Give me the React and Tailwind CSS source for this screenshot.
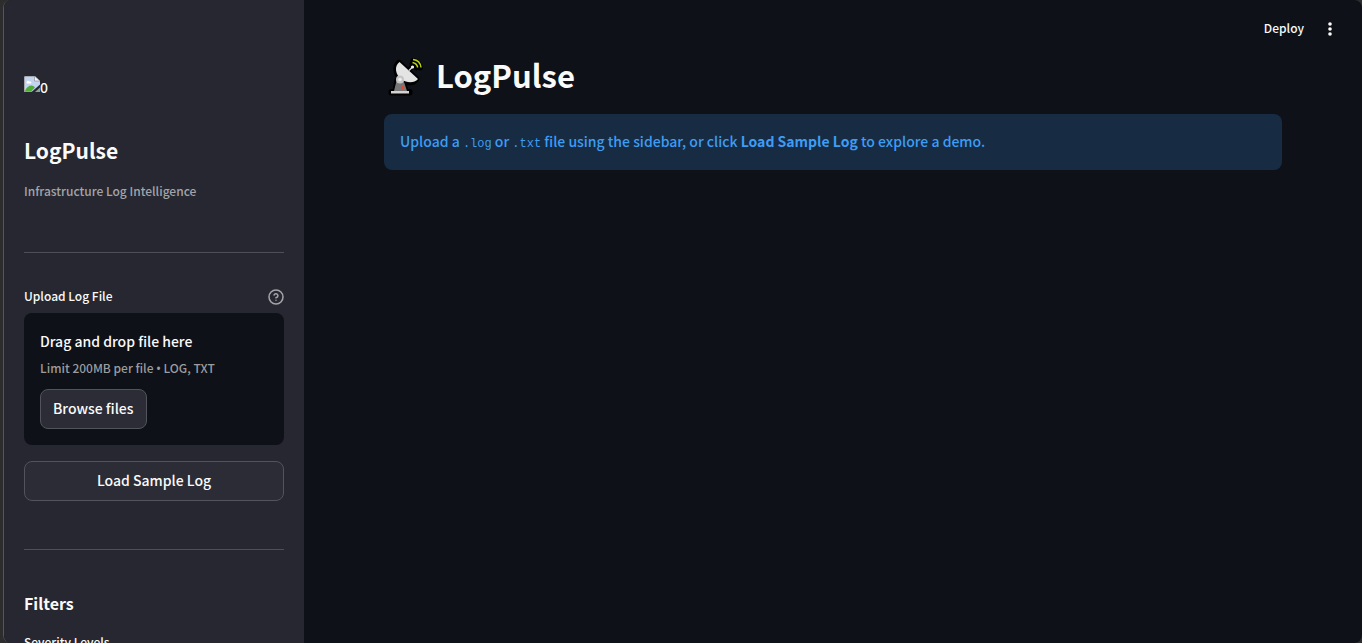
import { useRef } from "react";

function BrokenImage() {
  return (
    <svg width="16" height="16" viewBox="0 0 16 16" aria-hidden="true">
      <path d="M0 2a2 2 0 0 1 2-2h8.500L16 5v3.500L7.500 16H0z" fill="#c3d4f3" />
      <path d="M0 2a2 2 0 0 1 2-2h9v1H2a1 1 0 0 0-1 1v14H0z" fill="#a6a8ae" />
      <path d="M10.500 0L16 5h-5.500z" fill="#f8f8f8" stroke="#8d8f94" strokeWidth=".7" />
      <path d="M2.500 6.500c0-2 2.500-2.500 3-1 1.500-.5 2.500 1 1.500 2H3.500c-.6 0-1-.4-1-1z" fill="#fff" />
      <path d="M1 15c1-3.500 4-5.500 6.500-5.500 1.500 0 2.500.7 3.500 2L7.500 15z" fill="#4fae35" />
      <path d="M0 15.500h8" stroke="#9a9ca0" />
      <path d="M11 16l5-4.500V16z" fill="#8fa58d" />
    </svg>
  );
}

function Satellite() {
  return (
    <svg width="36" height="38" viewBox="0 0 36 38" aria-hidden="true">
      <g stroke="#000" strokeWidth="5" strokeLinejoin="round" strokeLinecap="round" fill="#000">
        <path d="M3 33.500h19V35H3z" />
        <path d="M7 33l2-11h6l3 11z" />
        <path d="M11 4C6 8 7 18 14 22c5 4 12 4 15-1z" />
        <path d="M21 12l4-4" />
        <path d="M25 2.500c4 .5 7 3.500 7.500 7.500M24 5.500c2.500.5 4 2 4.500 4.500" fill="none" />
      </g>
      <path d="M6 33l3-12h6l4 12z" fill="#777" />
      <path d="M3 33h18v2.500H3z" fill="#d3d3d3" />
      <path d="M11.500 4C6 8 7 17 14 21.500c5 3.800 12.500 3.500 16-.5z" fill="#e4e4e4" />
      <path d="M21 12.500l4-4" stroke="#ddd" strokeWidth="1.300" />
      <circle cx="24.500" cy="9" r="1.600" fill="#f3f3f3" />
      <path d="M25 1.500c4.500.5 7.500 3.500 8 8M24.500 4.500c3 .5 4.700 2.200 5.200 5" fill="none" stroke="#b6d30c" strokeWidth="1.500" />
      <circle cx="12" cy="21.500" r="4" fill="#c6c6c6" />
      <circle cx="12" cy="21.500" r="1.800" fill="#ededed" />
      <circle cx="15" cy="29.500" r="1.500" fill="#f0432c" />
    </svg>
  );
}

function HelpIcon() {
  return (
    <svg width="16" height="16" viewBox="0 0 24 24" fill="none" stroke="currentColor" strokeWidth="2.300" strokeLinecap="round" strokeLinejoin="round" aria-hidden="true">
      <circle cx="12" cy="12" r="10.500" />
      <path d="M9.090 9a3 3 0 0 1 5.830 1c0 2-3 3-3 3" />
      <path d="M12 17h.01" />
    </svg>
  );
}

const buttonStyle = "h-10 rounded-lg border border-[#52535b] bg-[#2b2c36] px-3 pb-0.5 text-[14px] leading-6";
const codeStyle = "font-['Liberation_Mono',monospace] text-[12px] font-normal leading-none";

function Sidebar() {
  const fileInput = useRef(null);
  return (
    <aside className="flex w-[300px] shrink-0 flex-col overflow-hidden bg-[#262730] px-5 pt-[72px]">
      <div className="flex h-6 shrink-0 items-center">
        <BrokenImage />
        <span className="pt-1.5 text-[14px] leading-6">0</span>
      </div>
      <h2 className="mt-[38px] shrink-0 text-[21px] font-bold leading-8">LogPulse</h2>
      <p className="mt-[15px] shrink-0 text-[12px] leading-5 text-[#a3a4a9]">Infrastructure Log Intelligence</p>
      <hr className="mt-[51px] shrink-0 border-[#4d4e56]" />
      <div className="mt-[33px] flex shrink-0 items-end justify-between">
        <label htmlFor="log-file" className="text-[12px] leading-5">Upload Log File</label>
        <button type="button" aria-label="Help" className="pb-px text-[#a3a4a9]"><HelpIcon /></button>
      </div>
      <section className="mt-[7px] flex shrink-0 flex-col items-start rounded-lg bg-[#0e1117] p-4">
        <span className="text-[14px] leading-6">Drag and drop file here</span>
        <span className="mt-[5px] text-[12px] leading-5 text-[#9b9c9f]">
          Limit 200MB per file <span className="font-['Noto_Sans',sans-serif] leading-none">•</span> LOG, TXT
        </span>
        <input ref={fileInput} id="log-file" type="file" accept=".log,.txt" className="hidden" />
        <button type="button" onClick={() => fileInput.current.click()} className={`mt-[11px] ${buttonStyle}`}>Browse files</button>
      </section>
      <button type="button" className={`mt-4 w-full shrink-0 ${buttonStyle}`}>Load Sample Log</button>
      <hr className="mt-12 shrink-0 border-[#4d4e56]" />
      <h3 className="mt-[39px] shrink-0 text-[16px] font-bold leading-7">Filters</h3>
      <p className="mt-[15px] shrink-0 text-[12px] leading-5">Severity Levels</p>
    </aside>
  );
}

export default function App() {
  return (
    <div className="h-screen bg-[#2d2d2d] pl-[3px] font-['Noto_Sans_CJK_SC','Noto_Sans',sans-serif] font-medium text-[#fafafa]">
      <div className="flex h-full overflow-hidden rounded-lg border-l border-[#565656] bg-[#0e1117]">
        <Sidebar />
        <div className="flex min-w-0 flex-1 flex-col">
          <header className="flex h-14 items-center justify-end gap-1.5 pr-5">
            <button type="button" className="px-2 text-[12px] leading-5">Deploy</button>
            <button type="button" aria-label="Main menu" className="flex w-6 justify-center pt-0.5">
              <svg width="4" height="14" viewBox="0 0 4 14" fill="currentColor" aria-hidden="true">
                <circle cx="2" cy="2" r="1.800" />
                <circle cx="2" cy="7" r="1.800" />
                <circle cx="2" cy="12" r="1.800" />
              </svg>
            </button>
          </header>
          <main className="px-20">
            <h1 className="flex h-[42px] items-center gap-3 pl-1 text-[31px] font-bold leading-[42px]">
              <Satellite />
              <span className="pb-1">LogPulse</span>
            </h1>
            <div role="status" className="mt-4 rounded-lg bg-[#172b43] px-4 pb-[17px] pt-[15px] text-[14px] leading-6 text-[#3d9df3]">
              Upload a <code className={codeStyle}>.log</code> or{" "}
              <code className={codeStyle}>.txt</code> file using the sidebar, or click{" "}
              <strong className="font-bold">Load Sample Log</strong> to explore a demo.
            </div>
          </main>
        </div>
      </div>
    </div>
  );
}
